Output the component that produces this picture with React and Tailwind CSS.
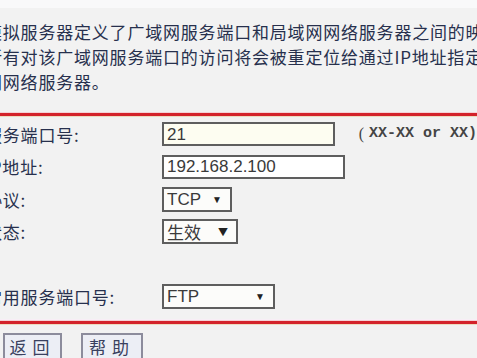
const cjk = "font-['Noto_Sans_CJK_SC','Noto_Sans',sans-serif]";
const latin = "font-['Liberation_Sans',Arial,sans-serif]";

function RedRule() {
  return (
    <div className="flex flex-col">
      <div className="h-px bg-[#f4d2d6]" />
      <div className="h-[3px] bg-[#d3232b]" />
      <div className="h-px bg-[#ecdcc0]" />
    </div>
  );
}

function Field({ label, children, extra }) {
  return (
    <div className="flex h-[32.5px] items-center">
      <div className={`w-[177px] shrink-0 whitespace-nowrap ${cjk} text-[17px] tracking-[0.8px] text-[#27304d]`}>
        {label}
      </div>
      {children}
      {extra}
    </div>
  );
}

function TextBox({ value, tint }) {
  return (
    <div
      className={`flex h-[24px] w-[183px] items-center border-2 border-[#5e5e5e] px-[3px] ${latin} text-[17px] text-[#3a3a3a] ${
        tint ? "bg-[#fdfdf1]" : "bg-white"
      }`}
    >
      {value}
    </div>
  );
}

function Pick({ value, width, cn }) {
  return (
    <div
      className={`flex h-[25px] items-center justify-between border-2 border-[#5e5e5e] bg-[#fcfcfa] pl-[3px] pr-[8px] text-[17px] text-[#3a3a3a] ${width} ${
        cn ? cjk : latin
      }`}
    >
      <span>{value}</span>
      <span className="text-[10px] text-[#222]">▼</span>
    </div>
  );
}

function Btn({ children }) {
  return (
    <div
      className={`flex h-[28px] items-center justify-center border-2 border-[#8c8c9c] bg-[#eceef5] ${cjk} text-[17px] tracking-[6px] text-[#39405e]`}
    >
      {children}
    </div>
  );
}

export default function App() {
  return (
    <div className="h-[358px] w-[477px] overflow-hidden bg-[#f2f2f2]">
      <div className="h-[8px] bg-[#f9f9fa]" />
      <div
        className={`ml-[-15px] mt-[11px] whitespace-nowrap ${cjk} text-[17px] leading-[25px] tracking-[0.8px] text-[#27304d]`}
      >
        <div>模拟服务器定义了广域网服务端口和局域网网络服务器之间的映射关系，</div>
        <div>所有对该广域网服务端口的访问将会被重定位给通过IP地址指定的局域</div>
        <div>网网络服务器。</div>
      </div>
      <div className="mt-[18px]">
        <RedRule />
      </div>
      <div className="ml-[-15px] pt-[1px]">
        <Field
          label="服务端口号:"
          extra={
            <span className="ml-[24px] flex items-center whitespace-nowrap text-[#444]">
              <span className="font-['Liberation_Serif',serif] text-[16px]">(</span>
              <span className="ml-[5px] font-['Liberation_Mono',monospace] text-[15px] font-bold">XX-XX or XX)</span>
            </span>
          }
        >
          <TextBox value="21" tint />
        </Field>
        <Field label="IP地址:">
          <TextBox value="192.168.2.100" />
        </Field>
        <Field label="协议:">
          <Pick value="TCP" width="w-[70px]" />
        </Field>
        <Field label="状态:">
          <Pick value="生效" width="w-[76px]" cn />
        </Field>
        <div className="h-[32.5px]" />
        <Field label="常用服务端口号:">
          <Pick value="FTP" width="w-[113px]" />
        </Field>
      </div>
      <div className="mt-[6px] bg-[#f8eef6] pt-[1px]">
        <RedRule />
      </div>
      <div className="mt-[8px] flex gap-[19px] pl-[3px]">
        <div className="w-[59px]">
          <Btn>返回</Btn>
        </div>
        <div className="w-[62px]">
          <Btn>帮助</Btn>
        </div>
      </div>
    </div>
  );
}
